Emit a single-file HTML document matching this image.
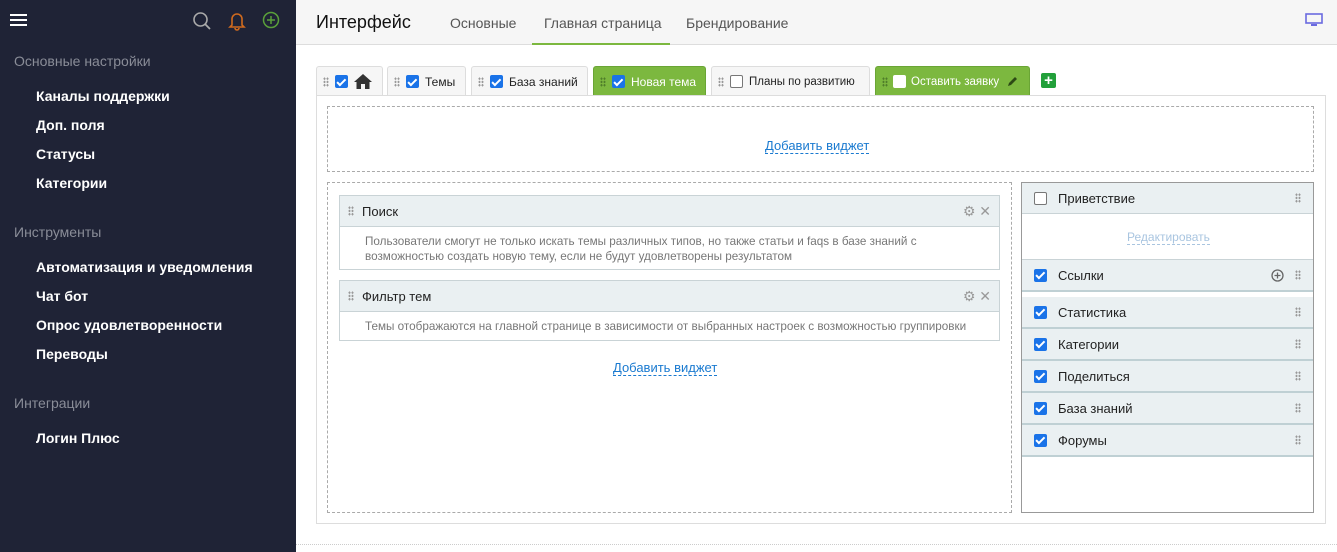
<!DOCTYPE html>
<html><head><meta charset="utf-8">
<style>
*{box-sizing:border-box;margin:0;padding:0}
body{width:1337px;height:552px;position:relative;overflow:hidden;background:#fff;font-family:"Liberation Sans","DejaVu Sans",sans-serif;color:#222}
.a{position:absolute}
#sb{left:0;top:0;width:296px;height:552px;background:#1f2336}
.sh{left:14px;font-size:14px;color:#8a8d98}
.si{left:36px;font-size:14px;font-weight:bold;color:#fff}
#hd{left:296px;top:0;width:1041px;height:45px;background:#f6f6f6;border-bottom:1px solid #ddd}
.tab{top:66px;height:30px;border:1px solid #ddd;border-bottom:none;background:#f6f6f6;border-radius:3px 3px 0 0;font-size:12px;display:flex;align-items:center;padding:0 6px 0 6px;gap:6px;color:#222;white-space:nowrap;overflow:hidden}
.tab.g{background:#7cb83f;border-color:#6aa535;color:#fff}
.dr{width:6px;height:10px;background-image:radial-gradient(circle,#999 1px,transparent 1.2px);background-size:3px 3.3px;flex:none}
.g .dr{background-image:radial-gradient(circle,#4f7e2a 1px,transparent 1.2px)}
.cb{width:13px;height:13px;border-radius:2px;background:#1a73e8;flex:none;position:relative}
.cb:after{content:"";position:absolute;left:4px;top:1.5px;width:3px;height:6.5px;border:solid #fff;border-width:0 2px 2px 0;transform:rotate(45deg)}
.cb.e{background:#fff;border:1px solid #777}
.cb.e:after{display:none}
.w{left:339px;width:661px;border:1px solid #c9d3d6}
.wh{height:31px;background:#eaf0f2;border-bottom:1px solid #c9d3d6;display:flex;align-items:center;padding:0 8px;font-size:13px;gap:8px}
.wb{font-size:11.7px;color:#777;line-height:15px;white-space:nowrap}
.ri{left:1022px;width:291px;height:32px;background:#eaf0f2;border-bottom:2px solid #bfd0d4;display:flex;align-items:center;padding:0 12px;font-size:13px;gap:11px}
.ri .dr{margin-left:auto}
.lnk{color:#1a7ad0;font-size:13px;border-bottom:1px dashed #1a7ad0;line-height:15px}
</style></head><body>
<div id="sb" class="a">
 <div class="a" style="left:10px;top:14px;width:17px;height:2px;background:#fff;box-shadow:0 5px 0 #fff,0 10px 0 #fff"></div>
 <svg class="a" style="left:192px;top:11px" width="20" height="20" viewBox="0 0 20 20"><circle cx="8.5" cy="8.5" r="6.5" fill="none" stroke="#aaa" stroke-width="1.6"/><line x1="13" y1="13" x2="18" y2="18" stroke="#aaa" stroke-width="1.8"/></svg>
 <svg class="a" style="left:228px;top:11px" width="18" height="20" viewBox="0 0 18 20"><path d="M4 14V8a5 5 0 0 1 10 0v6l2 2H2z M7 17a2 2 0 0 0 4 0" fill="none" stroke="#d06a1e" stroke-width="1.6"/></svg>
 <svg class="a" style="left:262px;top:11px" width="18" height="18" viewBox="0 0 18 18"><circle cx="9" cy="9" r="7.5" fill="none" stroke="#5aa03a" stroke-width="1.5"/><path d="M9 5v8M5 9h8" stroke="#5aa03a" stroke-width="1.5"/></svg>
 <div class="a sh" style="top:53px">Основные настройки</div>
 <div class="a si" style="top:88px">Каналы поддержки</div>
 <div class="a si" style="top:117px">Доп. поля</div>
 <div class="a si" style="top:146px">Статусы</div>
 <div class="a si" style="top:175px">Категории</div>
 <div class="a sh" style="top:224px">Инструменты</div>
 <div class="a si" style="top:259px">Автоматизация и уведомления</div>
 <div class="a si" style="top:288px">Чат бот</div>
 <div class="a si" style="top:317px">Опрос удовлетворенности</div>
 <div class="a si" style="top:346px">Переводы</div>
 <div class="a sh" style="top:395px">Интеграции</div>
 <div class="a si" style="top:430px">Логин Плюс</div>
</div>
<div id="hd" class="a">
 <div class="a" style="left:20px;top:12px;font-size:18px;color:#111">Интерфейс</div>
 <div class="a" style="left:154px;top:15px;font-size:14px;color:#555">Основные</div>
 <div class="a" style="left:248px;top:15px;font-size:14px;color:#555">Главная страница</div>
 <div class="a" style="left:236px;top:43px;width:138px;height:2px;background:#7cb83f"></div>
 <div class="a" style="left:390px;top:15px;font-size:14px;color:#555">Брендирование</div>
 <svg class="a" style="left:1009px;top:13px" width="18" height="14" viewBox="0 0 18 14"><rect x="1" y="1" width="16" height="9" fill="none" stroke="#6a6ae0" stroke-width="1.6"/><rect x="6" y="11" width="6" height="2" fill="#6a6ae0"/></svg>
</div>
<div class="a tab" style="left:316px;width:67px"><span class="dr"></span><span class="cb"></span><svg width="18" height="15" viewBox="0 0 18 15"><path d="M9 0L0 8h2.5v7h4.5v-5h4v5h4.5V8H18z" fill="#333"/></svg></div>
<div class="a tab" style="left:387px;width:79px"><span class="dr"></span><span class="cb"></span>Темы</div>
<div class="a tab" style="left:471px;width:117px"><span class="dr"></span><span class="cb"></span>База знаний</div>
<div class="a tab g" style="left:593px;width:113px"><span class="dr"></span><span class="cb"></span>Новая тема</div>
<div class="a tab" style="left:711px;width:159px;font-size:11.5px"><span class="dr"></span><span class="cb e"></span>Планы по развитию</div>
<div class="a tab g" style="left:875px;width:155px;font-size:11.5px;gap:5px"><span class="dr"></span><span class="cb e" style="border-color:#fff"></span>Оставить заявку<svg width="11" height="11" viewBox="0 0 11 11" style="margin-left:3px;flex:none"><path d="M1 10l1-3 6-6 2 2-6 6z" fill="#2d4a15"/></svg></div>
<div class="a" style="left:1041px;top:73px;width:15px;height:15px;background:#22a03a;border-radius:2px;color:#fff;font-weight:bold;font-size:15px;line-height:15px;text-align:center">+</div>
<div class="a" style="left:316px;top:95px;width:1010px;height:429px;border:1px solid #ddd"></div>
<div class="a" style="left:327px;top:106px;width:987px;height:66px;border:1px dashed #aaa"></div>
<div class="a" style="left:765px;top:137px"><span class="lnk">Добавить виджет</span></div>
<div class="a" style="left:327px;top:182px;width:685px;height:331px;border:1px dashed #aaa"></div>
<div class="a w" style="top:195px;height:75px"><div class="wh"><span class="dr"></span>Поиск<span style="margin-left:auto;color:#999;font-size:14px">⚙ ✕</span></div><div class="wb" style="padding:7px 0 0 25px">Пользователи смогут не только искать темы различных типов, но также статьи и faqs в базе знаний с<br>возможностью создать новую тему, если не будут удовлетворены результатом</div></div>
<div class="a w" style="top:280px;height:61px"><div class="wh"><span class="dr"></span>Фильтр тем<span style="margin-left:auto;color:#999;font-size:14px">⚙ ✕</span></div><div class="wb" style="padding:7px 0 0 25px">Темы отображаются на главной странице в зависимости от выбранных настроек с возможностью группировки</div></div>
<div class="a" style="left:613px;top:359px"><span class="lnk">Добавить виджет</span></div>
<div class="a" style="left:1021px;top:182px;width:293px;height:331px;border:1px solid #999"></div>
<div class="a ri" style="top:183px;height:31px;border-bottom:1px solid #c9d3d6"><span class="cb e"></span>Приветствие<span class="dr"></span></div>
<div class="a" style="left:1127px;top:228px"><span style="color:#a9c5e0;font-size:12px;border-bottom:1px dashed #a9c5e0">Редактировать</span></div>
<div class="a ri" style="top:259px;border-top:1px solid #c9d3d6;height:33px"><span class="cb"></span>Ссылки<svg width="13" height="13" viewBox="0 0 13 13" style="margin-left:auto"><circle cx="6.5" cy="6.5" r="5.5" fill="none" stroke="#666" stroke-width="1.3"/><path d="M6.5 3.5v6M3.5 6.5h6" stroke="#666" stroke-width="1.3"/></svg><span class="dr" style="margin-left:0"></span></div>
<div class="a ri" style="top:297px"><span class="cb"></span>Статистика<span class="dr"></span></div>
<div class="a ri" style="top:329px"><span class="cb"></span>Категории<span class="dr"></span></div>
<div class="a ri" style="top:361px"><span class="cb"></span>Поделиться<span class="dr"></span></div>
<div class="a ri" style="top:393px"><span class="cb"></span>База знаний<span class="dr"></span></div>
<div class="a ri" style="top:425px"><span class="cb"></span>Форумы<span class="dr"></span></div>
<div class="a" style="left:296px;top:544px;width:1041px;border-top:1px dotted #ccc"></div>
</body></html>
